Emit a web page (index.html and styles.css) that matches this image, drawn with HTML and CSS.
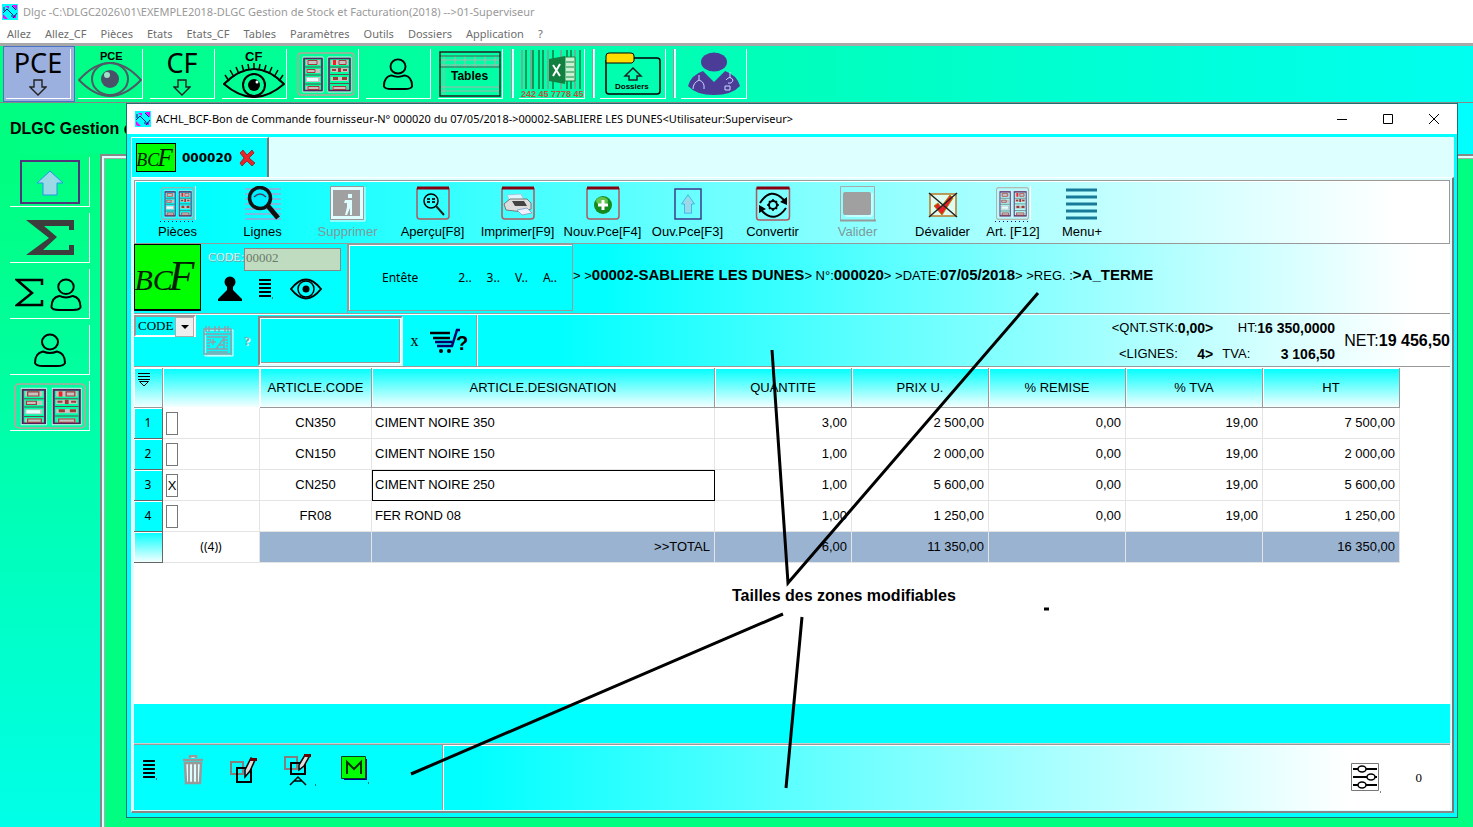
FILE: index.html
```html
<!DOCTYPE html>
<html lang="fr">
<head>
<meta charset="utf-8">
<title>DLGC Gestion de Stock et Facturation</title>
<link rel="stylesheet" href="styles.css">
</head>
<body>
<svg class="defs" aria-hidden="true">
  <symbol id="logo" viewBox="0 0 16 16"><rect width="16" height="16" fill="#0ff"/><path d="M3 2h4v3zM10 1h5v5zM1 10l5 5H3l-2-1zM14 11v3h-4z" fill="#f0f"/><path d="M5 5l6 6M2 7V3M1 9l4-4M9 12h4M11 14l4-5M10 2l4 4" stroke="#118" fill="none"/></symbol>
  <symbol id="shelves" viewBox="0 0 58 44" preserveAspectRatio="none">
    <rect x="1" y="1" width="56" height="42" rx="3" fill="none" stroke="#b8a49c" stroke-width="1.500"/>
    <g fill="none" stroke="#e8dce8"><path d="M6 5h20v35H6zM31 5h23v35H31z"/></g>
    <g fill="#c4c4c4"><path d="M9 8h14v5H9zM9 17h14v4H9zM9 25h14v5H9zM9 34h14v4H9zM34 8h17v5H34zM34 16h17v4H34zM34 25h17v4H34zM35 34h15v4H35z"/></g>
    <g fill="none" stroke="#5a1a5e" stroke-width="1.600"><path d="M7 6.500h18v32H7zM32 6.500h21v32H32z"/></g>
    <path d="M8 15h16M8 23h16M8 32h16M33 15h19M33 22.500h19M33 31.500h19" stroke="#555"/>
    <g fill="none" stroke="#a33a3a"><path d="M11 8.500h9v4h-9zM10 17.500h8v3h-8zM11 34.500h11v3H11zM42 8.500h7v4h-7zM36 34.500h13v3H36z"/></g>
    <path d="M10 26h11v3H10z" fill="#e8ffff"/>
    <path d="M36 8h3v5h-3z" fill="#e22"/><path d="M35 17h4v2h-4zM41 16h3v4h-3zM46 17h4v2h-4zM36 25h5v3h-5zM45 25h5v3h-5z" fill="#9a3a34"/>
  </symbol>
  <symbol id="person" viewBox="0 0 34 34"><g fill="none" stroke="#000" stroke-width="2"><ellipse cx="17" cy="9" rx="8" ry="7.500"/><path d="M10 18.500Q2 20 2 30q1 3 8 3h14q7 0 8-3 0-10-8-11.500-7 3-14 0z"/></g></symbol>
  <symbol id="downarrow" viewBox="0 0 18 17"><path d="M5 1h8v7h4l-8 8-8-8h4z" fill="none" stroke="#222" stroke-width="1.400"/></symbol>
  <symbol id="uparrow" viewBox="0 0 28 26" preserveAspectRatio="none"><path d="M14 1l13 12h-6v12H7V13H1z" fill="#9bd9e6" stroke="#1b9be8"/></symbol>
  <symbol id="sigma" viewBox="0 0 48 36"><path d="M0 0h48v10h-5V6H18l13 11-14 13h26v-5h5v10H0l23-17z" fill="#3d3d3d"/></symbol>
  <symbol id="card" viewBox="0 0 34 34"><path d="M1 2v28q0 3 3 3h26q3 0 3-3V2" fill="none" stroke="#b05a60" stroke-width="1.500"/><path d="M1 2h32" stroke="#860010" stroke-width="3"/></symbol>
  <symbol id="list" viewBox="0 0 14 20"><path d="M0 1h12M0 5h12M0 9h12M0 13h12M0 17h12" stroke="#000" stroke-width="2"/><path d="M13 19h1" stroke="#000"/></symbol>
</svg>

<header class="titlebar"><svg class="i16"><use href="#logo"/></svg><span>Dlgc -C:\DLGC2026\01\EXEMPLE2018-DLGC Gestion de Stock et Facturation(2018) --&gt;01-Superviseur</span></header>
<nav class="menubar">
  <button>Allez</button><button>Allez_CF</button><button>Pièces</button><button>Etats</button><button>Etats_CF</button><button>Tables</button><button>Paramètres</button><button>Outils</button><button>Dossiers</button><button>Application</button><button>?</button>
</nav>

<div class="maintools">
  <div class="slot selected"><button aria-label="PCE"><span class="big">PCE</span><svg width="18" height="17"><use href="#downarrow"/></svg></button></div>
  <div class="slot"><button aria-label="Voir PCE"><svg width="64" height="48" viewBox="0 0 64 48"><text x="22" y="10" font-size="11" font-weight="bold" font-family="Liberation Sans, sans-serif">PCE</text><g fill="none" stroke="#4e5b66" stroke-width="2"><path d="M1 30Q32-4 63 30 32 62 1 30z"/><ellipse cx="32" cy="29" rx="18" ry="16"/></g><circle cx="32" cy="29" r="9" fill="#4a5068"/><circle cx="29" cy="25" r="3" fill="#9ce0c8"/></svg></button></div>
  <div class="slot"><button aria-label="CF"><span class="big">CF</span><svg width="18" height="17"><use href="#downarrow"/></svg></button></div>
  <div class="slot"><button aria-label="Voir CF"><svg width="62" height="48" viewBox="0 0 62 48"><text x="22" y="11" font-size="13" font-weight="bold" font-family="Liberation Sans, sans-serif">CF</text><g fill="none" stroke="#000" stroke-width="2"><path d="M1 34Q31 4 61 34 31 60 1 34z"/><circle cx="31" cy="35" r="11"/><path d="M6 31l-4-6M11 27l-4-7M16 24l-3-7M21 22l-2-7M26 20l-1-6M31 19v-6M36 20l1-6M41 22l2-7M46 24l3-7M51 27l4-7M56 31l4-6" stroke-width="1.500"/></g><circle cx="31" cy="35" r="6"/><circle cx="34" cy="32" r="1.500" fill="#fff"/></svg></button></div>
  <div class="slot"><button aria-label="Rayonnages"><svg width="58" height="44"><use href="#shelves"/></svg></button></div>
  <div class="slot"><button aria-label="Tiers"><svg width="32" height="34"><use href="#person"/></svg></button></div>
  <div class="slot"><button aria-label="Tables"><svg width="62" height="46" viewBox="0 0 62 46"><path d="M1 9h60M1 14h60M5 5v40M16 5v12M26 5v12M36 5v12M46 5v12M56 5v12M1 36h60M1 40h60" stroke="#a8b4ae"/><path d="M1 5h60M1 16h60" stroke="#555"/><path d="M1 1h60v44H1z" fill="none" stroke="#222" stroke-width="1.500"/><text x="12" y="29" font-size="12" font-weight="bold" font-family="Liberation Sans, sans-serif">Tables</text></svg></button></div>
  <div class="slot ruled"><button aria-label="Code barres"><svg width="64" height="50" viewBox="0 0 64 50"><path d="M2 1v39M11 1v39M28 1v39M41 1v39M55 1v39" stroke="#8a9a90" stroke-width="1.500"/><path d="M6 1v39M13 1v39M19 1v39M23 1v39M33 1v39M47 1v39M51 1v39M60 1v39" stroke="#127a3c" stroke-width="1.500"/><path d="M45 8h10v24H45z" fill="#c8f0d4" stroke="#178a3c"/><path d="M46 13h8M46 18h8M46 23h8M46 28h8" stroke="#178a3c"/><path d="M29 10l16-3v28l-16-3z" fill="#128040"/><path d="M33 16l7 11M40 15l-7 12" stroke="#fff" stroke-width="2"/><text x="1" y="48" font-size="9" font-weight="bold" fill="#b5583c" font-family="Liberation Sans, sans-serif">242 45 7778 45</text></svg></button></div>
  <div class="slot ruled"><button aria-label="Dossiers"><svg width="56" height="44" viewBox="0 0 56 44"><path d="M1 8v31q0 3 3 3h48q3 0 3-3V9q0-3-3-3H29" fill="none" stroke="#000" stroke-width="1.500"/><path d="M1 11V4q0-3 3-3h22q3 0 3 3v5l-2 2z" fill="#fd0" stroke="#000"/><path d="M28 16l8 8h-4v4h-8v-4h-4z" fill="none" stroke="#222" stroke-width="1.500"/><text x="10" y="37" font-size="8" font-weight="bold" font-family="Liberation Sans, sans-serif">Dossiers</text></svg></button></div>
  <div class="slot ruled"><button aria-label="Superviseur"><svg width="52" height="44" viewBox="0 0 52 44"><g fill="#4b3c98"><ellipse cx="26" cy="10" rx="13" ry="9.500"/><path d="M15 19Q3 23 0 34q8 9 26 9t26-9Q49 23 37 19L26 30z"/></g><path d="M11 23v5q-6 3-6 9M11 28q6 2 5 9M42 20v6M38 28q4-5 7 0-1 4-5 3M37 34h5v4h-5z" fill="none" stroke="#cbd8ff"/></svg></button></div>
</div>

<main class="desktop">
  <h1 class="heading">DLGC Gestion de Stock</h1>
  <div class="body">
    <aside class="side">
      <button aria-label="Monter"><svg width="60" height="44" viewBox="0 0 60 44"><rect x="1" y="1" width="58" height="42" fill="none" stroke="#52347a" stroke-width="2"/><use href="#uparrow" x="16" y="10" width="28" height="26"/></svg></button>
      <button aria-label="Totaux"><svg width="48" height="36"><use href="#sigma"/></svg></button>
      <button aria-label="Totaux tiers"><svg width="70" height="34" viewBox="0 0 70 34"><path d="M27 8V3H2l15 13L2 28h25v-5" fill="none" stroke="#000" stroke-width="2.500"/><use href="#person" x="32" y="1" width="38" height="33"/></svg></button>
      <button aria-label="Tiers"><svg width="38" height="34"><use href="#person"/></svg></button>
      <button aria-label="Rayonnages"><svg width="72" height="46"><use href="#shelves"/></svg></button>
    </aside>
    <div class="frame"></div>
  </div>
</main>

<section class="window">
  <div class="wtitle"><svg class="i16"><use href="#logo"/></svg><span>ACHL_BCF-Bon de Commande fournisseur-N° 000020 du 07/05/2018-&gt;00002-SABLIERE LES DUNES&lt;Utilisateur:Superviseur&gt;</span>
    <div class="controls">
      <button aria-label="Réduire"><svg width="12" height="12"><path d="M1 6.500h10" stroke="#000"/></svg></button>
      <button aria-label="Agrandir"><svg width="12" height="12"><path d="M1.500 1.500h9v9h-9z" fill="none" stroke="#000"/></svg></button>
      <button aria-label="Fermer"><svg width="12" height="12"><path d="M1 1l10 10M11 1L1 11" stroke="#000"/></svg></button>
    </div>
  </div>
  <div class="tabs">
    <div class="tab"><div class="bcf small"><span>BC</span><span class="f">F</span></div><b>000020</b><button aria-label="Fermer l'onglet"><svg width="18" height="18" viewBox="0 0 18 18"><path d="M2 4l3-3 4 5 5-5 2 3-5 5 6 5-3 3-5-5-5 5-2-3 4-5z" fill="#e8262a" stroke="#8a1014" stroke-width=".7"/></svg></button></div>
  </div>
  <div class="page">
    <div class="actions">
      <button><svg width="36" height="36" viewBox="0 0 36 36"><use href="#shelves" x="1" y="1" width="33" height="33"/><path d="M35.500 0v34" stroke="#fff"/><path d="M0 35.500h36" stroke="#00a" stroke-dasharray="1 3"/></svg>Pièces</button>
      <button><svg width="36" height="36" viewBox="0 0 36 36"><path d="M0 3h36M0 8h36M0 13h36M0 18h36M0 23h36M0 28h36M0 33h36" stroke="#9aa6d8" stroke-width="1.500"/><circle cx="15" cy="12" r="10.500" fill="#0ef" stroke="#111" stroke-width="3.500"/><path d="M9 11q6-6 12 0" fill="none" stroke="#446" stroke-width="1.500"/><path d="M23 20l10 12" stroke="#111" stroke-width="5"/></svg>Lignes</button>
      <button disabled><svg width="36" height="36" viewBox="0 0 36 36"><path d="M.5.500h33v33H.5z" fill="#dff" stroke="#999"/><path d="M3 4h27v26H3z" fill="#a0a0a0"/><path d="M18 8h4v4h-4zM15 14h7v15h-2v-7l-3 7h-2l2-8v-4h-3z" fill="#dff"/><path d="M0 35h35V1" stroke="#fff" fill="none"/></svg>Supprimer</button>
      <button><svg width="34" height="36" viewBox="0 0 34 36"><use href="#card" width="34" height="34"/><circle cx="15" cy="15" r="7" fill="none" stroke="#000" stroke-width="1.500"/><path d="M11 13h3M16 13h3M11 16h3M16 16h3M20 20l8 9" stroke="#222" stroke-width="2"/></svg>Aperçu[F8]</button>
      <button><svg width="34" height="36" viewBox="0 0 34 36"><use href="#card" width="34" height="34"/><path d="M6 9l14-1 4 8H9z" fill="#dff5ff" stroke="#9cd"/><path d="M3 18l6-5h17l4 4v6l-8 3-17-2z" fill="#ddd" stroke="#777"/><path d="M11 15h12l3 5H14z" fill="#444"/><path d="M16 24l10-2 5 5-10 2z" fill="#eef" stroke="#8ac"/></svg>Imprimer[F9]</button>
      <button><svg width="34" height="36" viewBox="0 0 34 36"><use href="#card" width="34" height="34"/><circle cx="17" cy="19" r="9" fill="#168a1e"/><ellipse cx="16" cy="15" rx="6" ry="4" fill="#62c44a"/><path d="M17 14v10M12 19h10" stroke="#fff" stroke-width="3"/></svg>Nouv.Pce[F4]</button>
      <button><svg width="28" height="36" viewBox="0 0 28 36"><path d="M1 3h26v30H1z" fill="none" stroke="#3c3c8a" stroke-width="1.500"/><use href="#uparrow" x="7" y="8" width="14" height="20"/></svg>Ouv.Pce[F3]</button>
      <button><svg width="36" height="36" viewBox="0 0 36 36"><use href="#card" width="36" height="35"/><circle cx="18" cy="19" r="4" fill="none" stroke="#000" stroke-width="2"/><path d="M18 13v2M18 23v2M12 19h2M22 19h2M14 15l1 1M21 22l1 1M22 15l-1 1M15 22l-1 1" stroke="#000" stroke-width="1.500"/><path d="M5 17Q16 0 29 14M31 22Q20 38 7 25" fill="none" stroke="#000" stroke-width="2"/><path d="M32 11v8l-7-3zM4 27v-8l7 4z"/></svg>Convertir</button>
      <button disabled><svg width="36" height="36" viewBox="0 0 36 36"><path d="M.5.500h34v34H.5z" fill="none" stroke="#aaa"/><path d="M0 34.500h36" stroke="#999" stroke-width="2"/><rect x="3" y="6" width="28" height="23" rx="2" fill="#a0a0a0"/><path d="M32 7v23H5" fill="none" stroke="#fff"/></svg>Valider</button>
      <button><svg width="32" height="36" viewBox="0 0 32 36"><path d="M3 8h26v22H3z" fill="#dffcf0" stroke="#b87828" stroke-width="1.500"/><path d="M7 20l4-3 3 4 9-12 3 3-11 17z" fill="#e8202a" stroke="#a80"/><path d="M2 7l28 24M30 7L2 31" stroke="#222" stroke-width="1.500"/></svg>Dévalider</button>
      <button class="narrow"><svg width="36" height="36" viewBox="0 0 36 36"><use href="#shelves" x="1" y="1" width="33" height="33"/><path d="M35.500 0v34" stroke="#fff"/><path d="M0 35.500h36" stroke="#00a" stroke-dasharray="1 3"/></svg>Art. [F12]</button>
      <button class="last"><svg width="32" height="36" viewBox="0 0 32 36"><path d="M0 4h31M0 11h31M0 18h31M0 25h31M0 32h31" stroke="#167a98" stroke-width="3"/></svg>Menu+</button>
    </div>

    <div class="head">
      <div class="bcf"><span>BC</span><span class="f">F</span></div>
      <div class="client">
        <div class="field"><label for="code">CODE:</label><input id="code" value="00002" disabled></div>
        <div class="icons">
          <button aria-label="Tiers"><svg width="24" height="26"><circle cx="12" cy="6" r="5.500"/><path d="M9 10h6v4l9 9v2H0v-2l9-9z"/></svg></button>
          <button aria-label="Liste"><svg width="14" height="20"><use href="#list"/></svg></button>
          <button aria-label="Voir"><svg width="32" height="22" viewBox="0 0 32 22"><path d="M1 11Q16-8 31 11 16 30 1 11z" fill="none" stroke="#000" stroke-width="2"/><circle cx="16" cy="11" r="8" fill="none" stroke="#000" stroke-width="1.500"/><circle cx="16" cy="11" r="3.500"/></svg></button>
        </div>
      </div>
      <div class="subtabs"><button class="first">Entête</button><button>2..</button><button>3..</button><button>V..</button><button>A..</button></div>
      <p class="summary">&gt; &gt;<b>00002-SABLIERE LES DUNES</b>&gt; N°:<b>000020</b>&gt; &gt;DATE:<b>07/05/2018</b>&gt; &gt;REG. :<b>&gt;A_TERME</b></p>
    </div>

    <div class="entry">
      <div class="pick">
        <div class="combo"><select aria-label="Critère"><option>CODE</option></select></div>
        <svg class="cal" width="32" height="32" viewBox="0 0 32 32"><g fill="none" stroke="#fff"><path d="M3 5h28v26H3zM5 30h24"/></g><g fill="none" stroke="#8fa0a8"><path d="M2 4h27v25H2zM2 9h27M5 12h21M5 15h4M23 15h3M5 18h3M24 18h2M5 21h3M24 21h2M5 24h21M5 27h21M4 1v6M7 1v6M13 1v6M17 1v6M23 1v6M26 1v6" stroke-width="1.500"/></g><path d="M8 17h6M11 14v6M14 24l8-11v11M17 20h5" fill="none" stroke="#8fa0a8" stroke-width="1.500"/></svg>
        <span class="ask">?</span>
        <input class="search" aria-label="Recherche article">
        <span class="ex">x</span>
        <svg class="cart" width="38" height="26" viewBox="0 0 38 26"><path d="M0 5h20M3 10h17" stroke="#000" stroke-width="2.500"/><path d="M5 14h17M7 18h15l5-16h3" fill="none" stroke="#006" stroke-width="2.500"/><circle cx="11" cy="23" r="2"/><circle cx="19" cy="23" r="2"/><text x="26" y="22" font-size="20" font-weight="bold" font-family="Liberation Sans, sans-serif">?</text></svg>
      </div>
      <div class="totals">
        <dl class="grid"><dt>&lt;QNT.STK:</dt><dd>0,00&gt;</dd><dt>HT:</dt><dd>16 350,0000</dd><dt>&lt;LIGNES:</dt><dd>4&gt;</dd><dt class="start">TVA:</dt><dd>3 106,50</dd></dl>
        <p class="net">NET:<b>19 456,50</b></p>
      </div>
    </div>

    <div class="lines">
      <table>
        <colgroup><col class="c-num"><col class="c-tick"><col class="c-code"><col class="c-name"><col span="5" class="c-val"></colgroup>
        <thead><tr><th class="corner"><svg width="14" height="16" viewBox="0 0 14 16"><path d="M0 1.500h12M0 4.500h12M0 7.500h12" stroke="#000"/><path d="M1.500 9.500h9L6 14z" fill="none" stroke="#000"/></svg></th><th class="blank"></th><th>ARTICLE.CODE</th><th>ARTICLE.DESIGNATION</th><th>QUANTITE</th><th>PRIX U.</th><th>% REMISE</th><th>% TVA</th><th>HT</th></tr></thead>
        <tbody>
          <tr><th>1</th><td class="tick"><input type="checkbox" aria-label="Ligne 1"></td><td class="mid">CN350</td><td class="name">CIMENT NOIRE 350</td><td>3,00</td><td>2 500,00</td><td>0,00</td><td>19,00</td><td>7 500,00</td></tr>
          <tr><th>2</th><td class="tick"><input type="checkbox" aria-label="Ligne 2"></td><td class="mid">CN150</td><td class="name">CIMENT NOIRE 150</td><td>1,00</td><td>2 000,00</td><td>0,00</td><td>19,00</td><td>2 000,00</td></tr>
          <tr><th>3</th><td class="tick"><input type="checkbox" aria-label="Ligne 3" checked></td><td class="mid">CN250</td><td class="name current">CIMENT NOIRE 250</td><td>1,00</td><td>5 600,00</td><td>0,00</td><td>19,00</td><td>5 600,00</td></tr>
          <tr><th>4</th><td class="tick"><input type="checkbox" aria-label="Ligne 4"></td><td class="mid">FR08</td><td class="name">FER ROND 08</td><td>1,00</td><td>1 250,00</td><td>0,00</td><td>19,00</td><td>1 250,00</td></tr>
        </tbody>
        <tfoot><tr><th></th><td class="count">((4))</td><td></td><td>&gt;&gt;TOTAL</td><td>6,00</td><td>11 350,00</td><td></td><td></td><td>16 350,00</td></tr></tfoot>
      </table>
    </div>
    <div class="band"></div>
    <footer class="foot">
      <div class="footleft">
        <button aria-label="Liste"><svg width="14" height="20"><use href="#list"/></svg></button>
        <button aria-label="Supprimer"><svg width="22" height="30" viewBox="0 0 22 30"><path d="M8 3V1h6v2M1 5h20M3 8h16l-1 20H4z" fill="#dff" stroke="#999" stroke-width="2.500"/><path d="M7 9v18M11 9v18M15 9v18" stroke="#a0a0a0" stroke-width="2"/></svg></button>
        <button aria-label="Modifier"><svg width="30" height="28" viewBox="0 0 30 28"><path d="M2 6h12v12H2z" fill="none" stroke="#808080" stroke-width="2"/><path d="M8 12h14v14H8z" fill="none" stroke="#000" stroke-width="2"/><path d="M16 21v-7l6-12 4 2-5 11z" fill="#ddd" stroke="#000" stroke-width="1.500"/><path d="M21 2h7v3h-7z" fill="#600"/></svg></button>
        <button aria-label="Modifier article"><svg width="32" height="32" viewBox="0 0 32 32"><path d="M1 3h12v12H1z" fill="none" stroke="#808080" stroke-width="2"/><path d="M7 9h14v11H7z" fill="none" stroke="#000" stroke-width="2"/><path d="M15 16v-5l6-10 4 2-5 9z" fill="#ddd" stroke="#000" stroke-width="1.500"/><path d="M20 0h7v3h-7z" fill="#600"/><path d="M6 31l8-8 8 8M10 27h8" fill="none" stroke="#000" stroke-width="1.500"/><path d="M31 31h1" stroke="#000"/></svg></button>
        <button aria-label="Mémo"><svg width="28" height="28" viewBox="0 0 28 28"><path d="M3 3h23v21H3z" fill="#008"/><path d="M.5.500h24v22H.5z" fill="#0f0" stroke="#004020"/><path d="M6 18V6l7 7 7-7v12" fill="none" stroke="#003000" stroke-width="2"/><path d="M27 27h1" stroke="#000"/></svg></button>
      </div>
      <div class="footright">
        <button aria-label="Réglages"><svg width="30" height="30" viewBox="0 0 30 30"><path d="M.5.500h27v27H.5z" fill="#fff" stroke="#777"/><path d="M2 6h24M2 14h24M2 22h24" stroke="#000" stroke-width="2"/><g fill="#fff" stroke="#000" stroke-width="1.500"><ellipse cx="11" cy="6" rx="4" ry="3"/><ellipse cx="20" cy="14" rx="4" ry="3"/><ellipse cx="11" cy="22" rx="4" ry="3"/></g><path d="M29 29h1" stroke="#000"/></svg></button>
        <span class="zero">0</span>
      </div>
    </footer>
  </div>
</section>

<svg class="notes" width="1473" height="827" viewBox="0 0 1473 827">
  <path d="M772 350l16 233L1038 293M783 614L411 774M802 617l-16 171M1044 609h5" fill="none" stroke="#000" stroke-width="3"/>
  <text x="732" y="601">Tailles des zones modifiables</text>
</svg>
</body>
</html>
```
FILE: styles.css
```css
* { box-sizing: border-box; }
body { margin: 0; min-height: 100vh; display: flex; flex-direction: column; position: relative; overflow: hidden; background: #fff; color: #000; font: 13px/16px "Liberation Sans", Arial, sans-serif; }
button { border: 0; padding: 0; margin: 0; background: none; font: inherit; color: inherit; }
svg { display: block; flex: none; }
p, h1, dl, dd { margin: 0; }
.defs { position: absolute; width: 0; height: 0; }
.i16 { width: 16px; height: 16px; }

.titlebar { display: flex; align-items: center; gap: 5px; height: 24px; padding-left: 2px; color: #999; font: 11px/16px "Noto Sans", sans-serif; }
.menubar { display: flex; gap: 14px; height: 19px; padding-left: 7px; color: #6d6d6d; font: 11px/17px "Noto Sans", sans-serif; }

.maintools { display: flex; height: 60px; padding-left: 3px; border-top: 3px solid #a8a8a8; border-bottom: 1px solid #888; background: linear-gradient(90deg, #00ff80, #00fff0); }
.slot { width: 72px; padding: 3px 4px 4px 3px; }
.slot.selected { background: #9cb0e0; outline: 1px solid #4a72c4; outline-offset: -1px; }
.slot button { display: flex; flex-direction: column; align-items: center; justify-content: center; width: 65px; height: 50px; border-right: 1px solid #fff; border-bottom: 1px solid #fff; }
.slot.ruled { width: 81px; padding-left: 12px; }
.slot.ruled button { width: 66px; position: relative; }
.slot.ruled button::before { content: ""; position: absolute; left: -8px; top: 0; bottom: 0; width: 2px; background: #dff; border-left: 1px solid #999; }
.slot .big { font: 27px/24px "Noto Sans", sans-serif; margin-bottom: 4px; }

.desktop { flex: 1; display: flex; flex-direction: column; background: linear-gradient(180deg, #00ff80 10%, #00ffe8); }
.heading { height: 51px; padding: 17px 10px; font-size: 16px; line-height: 17px; background: linear-gradient(90deg, #00ff80, #0ff); }
.body { flex: 1; display: flex; }
.side { width: 100px; padding: 3px 10px 0 10px; display: flex; flex-direction: column; gap: 6px; }
.side button { display: flex; align-items: center; justify-content: center; width: 80px; height: 50px; border-right: 1px solid #fff; border-bottom: 1px solid #fff; }
.frame { flex: 1; background: #00ff80; border: 2px solid #888; border-right: 0; border-bottom: 0; box-shadow: inset 2px 2px #dff, inset 3px 3px #aaa; }

.window { position: absolute; left: 126px; right: 15px; top: 103px; bottom: 9px; display: flex; flex-direction: column; border: 1px solid #207070; background: #0ff; padding-bottom: 4px; }
.wtitle { display: flex; align-items: center; gap: 5px; height: 30px; padding-left: 8px; background: #fff; font: 11px/16px "Noto Sans", sans-serif; white-space: nowrap; }
.controls { margin-left: auto; display: flex; }
.controls button { display: flex; justify-content: center; width: 46px; }
.tabs { margin: 3px 3px 0 4px; height: 40px; background: #dff; border-left: 1px solid #fff; display: flex; flex: none; }
.tab { display: flex; align-items: center; gap: 6px; width: 137px; padding-left: 4px; background: #0ff; border-top: 1px solid #fff; border-right: 2px solid #777; font: bold 12px/16px "DejaVu Sans", sans-serif; }
.page { flex: 1; display: flex; flex-direction: column; margin: 0 3px 0 4px; border: 1px solid #fff; border-right: 2px solid #777; border-bottom: 2px solid #888; padding: 2px 2px 1px 2px; background: #dff; }

.bcf { display: flex; align-items: baseline; justify-content: center; width: 67px; height: 67px; border: 1px solid #000; border-bottom-width: 2px; background: #0f0; color: #002000; font: italic 30px/62px "Liberation Serif", serif; flex: none; }
.bcf .f { font-size: 42px; padding-right: 6px; margin-left: -4px; }
.bcf.small { width: 40px; height: 29px; font-size: 18px; line-height: 28px; border-bottom-width: 1px; }
.bcf.small .f { font-size: 25px; padding-right: 3px; margin-left: -2px; }

.actions { display: flex; height: 64px; padding: 5px 0 0; border: 1px solid #999; box-shadow: inset 1px 1px #fff; background: linear-gradient(90deg, #0ff 5%, #fff 96%); }
.actions button { display: flex; flex-direction: column; align-items: center; justify-content: flex-start; gap: 2px; width: 85px; white-space: nowrap; }
.actions .narrow { width: 56px; }
.actions .last { width: 82px; }
.actions button:disabled { color: #7d9a9a; }

.head { display: flex; height: 70px; border-bottom: 1px solid #999; background: #0ff; }
.client { width: 147px; padding: 4px 6px 0 7px; border-right: 1px solid #999; }
.field { display: flex; font: 13px/18px "Liberation Serif", serif; }
.field label { width: 36px; font-size: 12px; color: #dff; text-shadow: 1px 1px #899; }
.field input { flex: 1; min-width: 0; height: 23px; padding: 0 1px 4px; border: 1px solid #888; background: #c0dcc0; color: #6a7a6a; font: inherit; }
.icons { display: flex; align-items: center; gap: 17px; padding: 5px 0 0 10px; }
.subtabs { display: flex; align-items: center; gap: 15px; width: 225px; height: 67px; border: 1px solid #999; box-shadow: inset 1px 1px #fff; padding-left: 33px; font: 12px/16px "Noto Sans", sans-serif; }
.subtabs .first { margin-right: 25px; }
.summary { flex: 1; padding-top: 22px; white-space: nowrap; line-height: 18px; background: linear-gradient(90deg, #0ff 3%, #fff 96%); }
.summary b { font-size: 15px; }

.entry { display: flex; height: 53px; border-bottom: 1px solid #999; border-top: 1px solid #fff; background: #0ff; }
.pick { display: flex; align-items: center; width: 343px; border-right: 1px solid #999; }
.combo { position: relative; align-self: flex-start; width: 62px; height: 22px; border: 2px solid #999; border-right-color: #fff; border-bottom-color: #fff; }
.combo select { appearance: none; width: 100%; height: 100%; padding: 0 2px; border: 0; background: #0ff; font: 13px/16px "Liberation Serif", serif; }
.combo::after { content: ""; position: absolute; right: 0; top: 0; width: 17px; height: 18px; background: #eee; border: 1px solid #aaa; }
.combo::before { content: ""; position: absolute; z-index: 1; right: 5px; top: 8px; border: 4px solid transparent; border-top-color: #000; border-bottom: 0; }
.cal { margin-left: 6px; }
.ask { width: 24px; padding-left: 10px; font: bold 12px/16px "Liberation Serif", serif; color: #8aa; text-shadow: 1px 1px #fff; }
.search { width: 145px; height: 50px; border: 2px solid #888; border-right-color: #dff; border-bottom-color: #dff; background: #0ff; box-shadow: inset 0 0 0 1px #fff, inset -1px -1px 0 1px #999; }
.ex { width: 27px; text-align: center; font: 16px/16px "Liberation Serif", serif; padding-right: 4px; }
.totals { flex: 1; display: flex; align-items: center; justify-content: flex-end; gap: 9px; border-left: 1px solid #fff; background: linear-gradient(90deg, #0ff 8%, #fff 96%); white-space: nowrap; }
.grid { display: grid; grid-template-columns: auto auto 44px auto; row-gap: 10px; }
.grid dt, .grid dd { text-align: right; }
.grid dd { font-weight: bold; font-size: 14px; }
.grid .start { padding-right: 7px; }
.net { font-size: 16px; line-height: 18px; }

.lines { flex: 1; background: #fff; border-top: 1px solid #fff; }
table { table-layout: fixed; width: 1266px; border-collapse: separate; border-spacing: 0; }
.c-num { width: 29px; } .c-tick { width: 97px; } .c-code { width: 112px; } .c-name { width: 343px; } .c-val { width: 137px; }
th, td { padding: 0 4px; font-weight: normal; }
thead th { height: 40px; border-right: 1px solid #999; border-bottom: 1px solid #999; background: linear-gradient(180deg, #0ff, #f4ffff); box-shadow: inset 1px 1px #fff; }
.corner { padding: 4px 4px; vertical-align: top; }
thead .blank { border-right-color: #fff; border-bottom-color: #fff; }
tbody th, tfoot th { height: 31px; background: #0ff; border-right: 1px solid #666; border-bottom: 1px solid #666; box-shadow: inset 1px 1px #fff; font: 12px/16px "Noto Sans", sans-serif; }
td { text-align: right; border-right: 1px solid #e4e4e4; border-bottom: 1px solid #e4e4e4; }
.mid { text-align: center; }
.name { text-align: left; padding-left: 3px; }
.current { outline: 1px solid #000; outline-offset: -1px; }
.tick { text-align: left; padding: 0 3px; }
.tick input { appearance: none; display: block; width: 12px; height: 23px; margin: 0; border: 1px solid #777; background: #fff; text-align: center; }
.tick input:checked::before { content: "X"; font: 13px/21px "Liberation Sans", sans-serif; display: block; }
tfoot th { background: linear-gradient(180deg, #0ff, #f4ffff); }
tfoot td { background: #9ab3d0; }
tfoot .count { background: #fff; text-align: center; font: 12px/16px "Noto Sans", sans-serif; }

.band { height: 40px; background: #0ff; border-bottom: 1px solid #ccc; }
.foot { display: flex; height: 66px; border-top: 1px solid #999; background: #0ff; }
.footleft { display: flex; gap: 25px; width: 308px; height: 49px; align-items: center; padding-left: 9px; }
.footright { flex: 1; display: flex; align-items: center; justify-content: flex-end; gap: 35px; padding-right: 28px; border-left: 1px solid #999; box-shadow: inset 1px 1px #fff; background: linear-gradient(90deg, #0ff 3%, #fff 90%); }
.zero { font: 13px/16px "Liberation Serif", serif; }

.notes { position: absolute; left: 0; top: 0; pointer-events: none; }
.notes text { font: bold 16px "Liberation Sans", Arial, sans-serif; }
```
